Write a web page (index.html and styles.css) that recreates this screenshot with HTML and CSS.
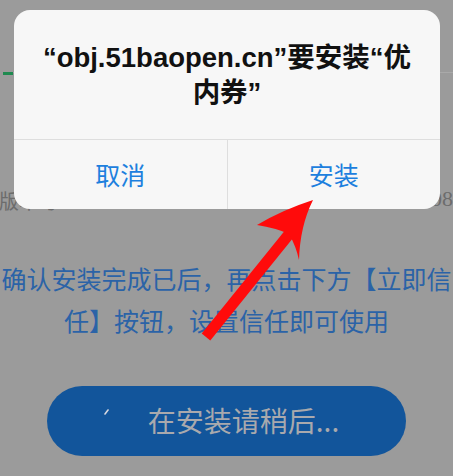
FILE: index.html
```html
<!DOCTYPE html>
<html lang="zh-CN">
<head>
<meta charset="utf-8">
<link rel="stylesheet" href="styles.css">
</head>
<body>
<div class="page">
  <div class="header"></div>
  <div class="rule"><span class="green"></span><span class="line"></span></div>
  <div class="version"><span class="v-left">版本号</span><span class="v-right">1.08</span></div>
  <p class="notice">确认安装完成已后，再点击下方【立即信任】按钮，设置信任即可使用</p>
  <div class="install-btn">
    <svg class="spinner" width="20" height="20" viewBox="0 0 20 20"><line x1="3" y1="8" x2="6" y2="4" stroke="#d8d8e0" stroke-width="1.6" stroke-linecap="round"/></svg>
    <span class="btn-text">在安装请稍后...</span>
  </div>
</div>

<div class="dialog">
  <div class="dialog-title">“obj.51baopen.cn”要安装“优内券”</div>
  <div class="dialog-actions">
    <div class="action">取消</div>
    <div class="action">安装</div>
  </div>
</div>

<svg class="arrow" width="453" height="476" viewBox="0 0 453 476">
  <line x1="206" y1="337" x2="290" y2="233" stroke="#ff0b0b" stroke-width="11"/>
  <path d="M313,200 Q282,210 257,225 Q276,228 289,234 Q296,246 299,260 Q300,226 313,200 Z" fill="#ff0b0b"/>
</svg>
</body>
</html>
```
FILE: styles.css
```css
html, body {
  margin: 0;
  padding: 0;
}
body {
  width: 453px;
  height: 476px;
  overflow: hidden;
  background: #9b9b9b;
  position: relative;
  font-family: "Noto Sans CJK SC", sans-serif;
}
.page {
  display: flex;
  flex-direction: column;
}
.header {
  height: 72px;
}
.rule {
  display: flex;
  align-items: flex-start;
  height: 3px;
}
.green {
  width: 10px;
  height: 3px;
  margin-left: 3px;
  background: #1f8a50;
}
.line {
  flex: 1;
  height: 1px;
  background: #a9a9a9;
}
.version {
  margin-top: 113px;
  display: flex;
  justify-content: space-between;
  height: 26px;
  line-height: 26px;
  font-size: 20px;
  color: #6c6c6c;
}
.v-left {
  margin-left: -1px;
}
.v-right {
  font-family: "Liberation Serif", serif;
  font-size: 22px;
  margin-top: -2px;
}
.notice {
  margin: 43px 0 0 0;
  width: 453px;
  font-size: 25px;
  line-height: 42px;
  text-align: center;
  color: #2b63a7;
}
.install-btn {
  margin: 45px 0 0 47px;
  width: 359px;
  height: 70px;
  border-radius: 35px;
  background: #12559b;
  display: flex;
  align-items: center;
  justify-content: center;
  gap: 26px;
}
.spinner {
  margin-top: -10px;
  margin-left: -12px;
}
.btn-text {
  font-size: 28px;
  color: #a9a9ad;
  margin-top: -2px;
}
.dialog {
  position: absolute;
  left: 14px;
  top: 10px;
  width: 426px;
  height: 199px;
  border-radius: 16px;
  background: #f7f7f7;
  display: flex;
  flex-direction: column;
  overflow: hidden;
}
.dialog-title {
  padding: 30px 22px 0;
  height: 130px;
  box-sizing: border-box;
  text-align: center;
  font-family: "Liberation Sans", "Noto Sans CJK SC", sans-serif;
  font-weight: bold;
  font-size: 27.5px;
  line-height: 35px;
  color: #111;
  border-bottom: 1px solid #dedede;
}
.dialog-actions {
  flex: 1;
  display: flex;
}
.action {
  flex: 1;
  display: flex;
  align-items: center;
  justify-content: center;
  font-size: 25px;
  color: #1d80de;
  padding-bottom: 2px;
}
.action + .action {
  border-left: 1px solid #dedede;
}
.arrow {
  position: absolute;
  left: 0;
  top: 0;
}
```
